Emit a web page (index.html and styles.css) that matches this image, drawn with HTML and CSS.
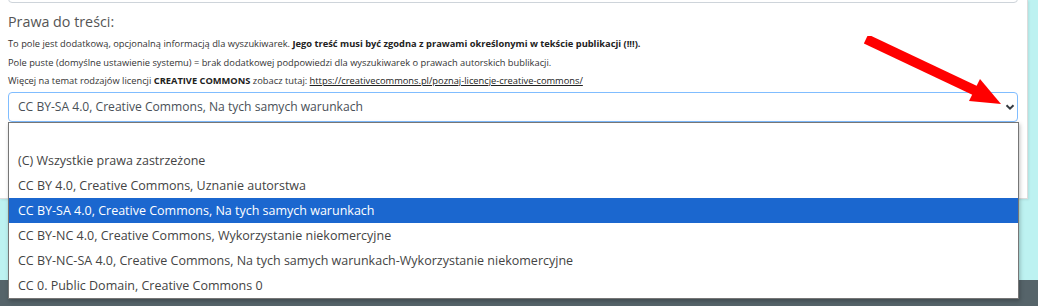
FILE: index.html
```html
<!DOCTYPE html>
<html lang="pl">
<head>
  <meta charset="UTF-8" />
  <meta name="viewport" content="width=device-width, initial-scale=1" />
  <title>Prawa do treści</title>
  <link rel="stylesheet" href="styles.css">
</head>
<body>
  <div class="card">
    <div class="prev-input"></div>

    <label class="field-label">Prawa do treści:</label>
    <p class="hint first">To pole jest dodatkową, opcjonalną informacją dla wyszukiwarek. <b>Jego treść musi być zgodna z prawami określonymi w tekście publikacji (!!!).</b></p>
    <p class="hint">Pole puste (domyślne ustawienie systemu) = brak dodatkowej podpowiedzi dla wyszukiwarek o prawach autorskich bublikacji.</p>
    <p class="hint">Więcej na temat rodzajów licencji <b>CREATIVE COMMONS</b> zobacz tutaj: <a href="#">https://creativecommons.pl/poznaj-licencje-creative-commons/</a></p>

    <div class="select-wrap">
      <div class="select">
        <span>CC BY-SA 4.0, Creative Commons, Na tych samych warunkach</span>
        <svg class="chevron" width="10" height="8" viewBox="0 0 10 8">
          <path d="M1.5 2.2 L5 5.7 L8.5 2.2" fill="none" stroke="#343a40" stroke-width="2" />
        </svg>
      </div>

      <ul class="options">
        <li>&nbsp;</li>
        <li>(C) Wszystkie prawa zastrzeżone</li>
        <li>CC BY 4.0, Creative Commons, Uznanie autorstwa</li>
        <li class="selected">CC BY-SA 4.0, Creative Commons, Na tych samych warunkach</li>
        <li>CC BY-NC 4.0, Creative Commons, Wykorzystanie niekomercyjne</li>
        <li>CC BY-NC-SA 4.0, Creative Commons, Na tych samych warunkach-Wykorzystanie niekomercyjne</li>
        <li>CC 0. Public Domain, Creative Commons 0</li>
      </ul>

      <!-- strzałka z zrzutu ekranu -->
      <svg class="arrow" width="180" height="80" viewBox="0 0 180 80">
        <line x1="14" y1="3" x2="124" y2="55" stroke="#ff0000" stroke-width="10" />
        <polygon points="128,43 117,65 149,68" fill="#ff0000" />
      </svg>
    </div>
  </div>

  <div class="footer"></div>
</body>
</html>
```

FILE: styles.css
```css
body {
  margin: 0;
  background: #bdf2f1;
  font-family: 'Open Sans', 'Noto Sans', sans-serif;
  color: #212529;
  overflow: hidden;
}
.card {
  display: flow-root;
  position: relative;
  box-sizing: border-box;
  width: 1028px;
  height: 199px;
  padding: 0 8px;
  background: #fff;
  border-right: 1px solid #dcdcdc;
  border-bottom: 1px solid #dcdcdc;
  box-shadow: 1px 1px 2px rgba(0,0,0,0.08);
}
.prev-input {
  height: 32px;
  margin-top: -29px;
  margin-right: 1px;
  border: 1px solid #ced4da;
  border-radius: 4px;
  box-sizing: border-box;
}
.field-label {
  display: block;
  margin-top: 10px;
  font-size: 14.3px;
  color: #555;
  line-height: 18px;
}
.hint {
  margin: 0;
  font-size: 9.3px;
  line-height: 18.5px;
  color: #333;
}
.hint.first { margin-top: 4px; }
.hint b { font-weight: 700; color: #222; }
.hint a { color: #222; text-decoration: underline; }
.select-wrap {
  position: relative;
  margin-top: 1px;
  margin-right: 1px;
}
.select {
  display: flex;
  align-items: center;
  justify-content: space-between;
  height: 30px;
  padding: 0 2px 0 9px;
  border: 1px solid #80bdff;
  border-radius: 4px;
  font-size: 12.1px;
  color: #495057;
  box-sizing: border-box;
}
.options {
  position: absolute;
  top: 30px;
  left: 0;
  right: -1px;
  margin: 0;
  padding: 0;
  list-style: none;
  background: #fff;
  border: 1px solid #767676;
  box-shadow: 1px 2px 4px rgba(0,0,0,0.25);
  z-index: 2;
}
.options li {
  height: 25px;
  line-height: 25px;
  padding-left: 9px;
  font-size: 12.5px;
  color: #444;
  white-space: nowrap;
}
.options li.selected {
  background: #1b67cf;
  color: #fff;
}
.arrow {
  position: absolute;
  left: 844px;
  top: -56px;
  z-index: 1;
}
.footer {
  height: 30px;
  margin-top: 81px;
  background: #56646a;
}
```
